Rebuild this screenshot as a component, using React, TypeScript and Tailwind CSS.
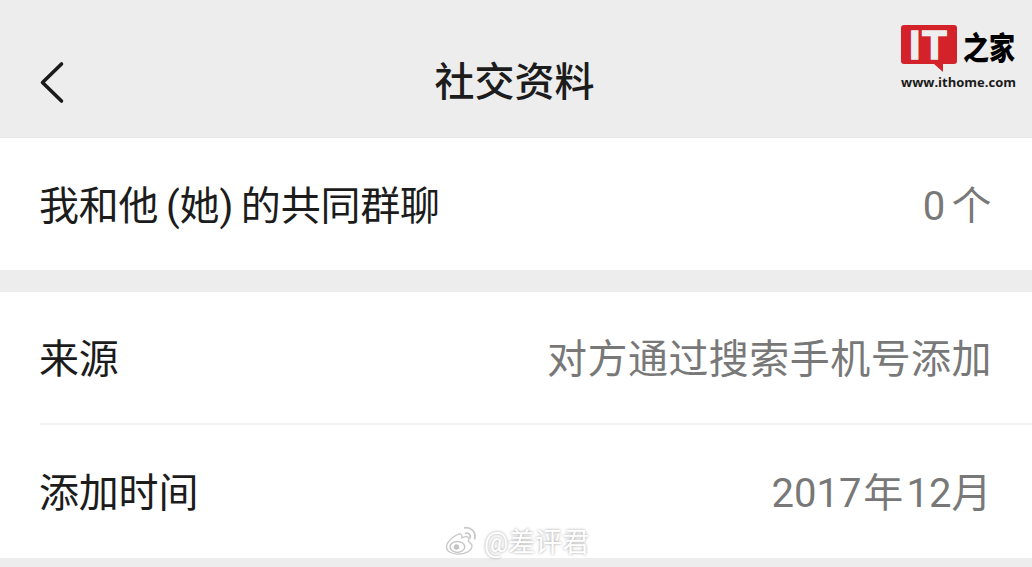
import React from "react";

const cjk = "font-['Roboto','Noto_Sans_CJK_SC',sans-serif]";

function Row({ label, value, border }: { label: React.ReactNode; value: React.ReactNode; border?: boolean }) {
  return (
    <div className="pl-10 bg-white">
      <div className={`flex items-center justify-between pr-10 pt-[5px] ${border ? "h-[133px] border-b-2 border-[#f3f3f3]" : "h-[132px]"}`}>
        <div className="ml-[-1px] text-[40px] leading-none tracking-[-0.2px] [word-spacing:-2px] text-[#1c1c1c]">{label}</div>
        <div className="text-[40px] leading-none tracking-[0.45px] [word-spacing:-4.5px] text-[#787878]">{value}</div>
      </div>
    </div>
  );
}

function Logo() {
  return (
    <div className="absolute left-[901px] top-[25px] w-[114px]">
      <div className="flex items-start">
        <div className="relative w-[56px] h-[39px] rounded-[3px] bg-[#d3222a] flex items-center justify-center">
          <span className="font-['Liberation_Sans',sans-serif] text-[40px] leading-none font-bold text-[#eeeeee] [-webkit-text-stroke:1.5px_#eeeeee] tracking-[2px]">IT</span>
          <div className="absolute left-[33px] top-[39px] border-t-[8px] border-l-[9px] border-t-[#d3222a] border-l-transparent" />
        </div>
        <div className="ml-[6px] mt-[3px] text-[26px] leading-[36px] font-black text-black whitespace-nowrap font-['Noto_Sans_CJK_SC',sans-serif] scale-y-[1.2]">之家</div>
      </div>
      <div className="mt-[11px] text-[13px] leading-[15px] font-bold text-[#1a1a1a] font-['Open_Sans',sans-serif] whitespace-nowrap">www.ithome.com</div>
    </div>
  );
}

function Watermark() {
  return (
    <div className="absolute left-[443px] top-[525px] flex items-center">
      <svg width="37" height="30" viewBox="0 0 37 33" fill="none">
        <path d="M15 9C8 12 2 18 2 23c0 5 6 8 13 8 8 0 15-4 15-9 0-3-3-4-4-5 1-2 1-4-1-5-2-1-4 0-6 1 0-3-1-5-4-4z" fill="#ffffff" stroke="#c9c9c9" strokeWidth="1.5" />
        <ellipse cx="14" cy="23" rx="8" ry="6" fill="#ffffff" stroke="#c4c4c4" strokeWidth="1.5" />
        <circle cx="13" cy="23" r="3" fill="#c4c4c4" />
        <path d="M23 8c3-1 6 2 5 5M22 2c6-1 13 4 11 12" stroke="#c9c9c9" strokeWidth="2" strokeLinecap="round" />
      </svg>
      <span className="ml-[4px] mt-[5px] text-[27px] leading-none text-white [text-shadow:0_0_3px_#9a9a9a]">@差评君</span>
    </div>
  );
}

export default function App() {
  return (
    <div className={`relative w-[1032px] h-[567px] overflow-hidden bg-[#ededed] ${cjk}`}>
      <div className="relative h-[138px] flex items-center justify-center border-b border-[#e6e6e6]">
        <svg className="absolute left-[38px] top-[58px]" width="28" height="48" viewBox="0 0 28 48" fill="none">
          <path d="M23.5 6 4.5 24.5 23.5 43" stroke="#1a1a1a" strokeWidth="3.6" strokeLinecap="round" strokeLinejoin="round" />
        </svg>
        <h1 className="text-[40px] leading-none font-medium text-[#1c1c1c] mt-[28px] ml-[-3px]">社交资料</h1>
      </div>
      <Row label="我和他 (她) 的共同群聊" value="0 个" />
      <div className="h-[22px]" />
      <Row label="来源" value="对方通过搜索手机号添加" border />
      <div className="h-[133px] bg-white">
        <Row
          label="添加时间"
          value={
            <>
              <span className="tracking-normal mr-[-4px]">2017</span> 年 <span className="tracking-normal ml-[-3px]">12</span>月
            </>
          }
        />
      </div>
      <Logo />
      <Watermark />
    </div>
  );
}
